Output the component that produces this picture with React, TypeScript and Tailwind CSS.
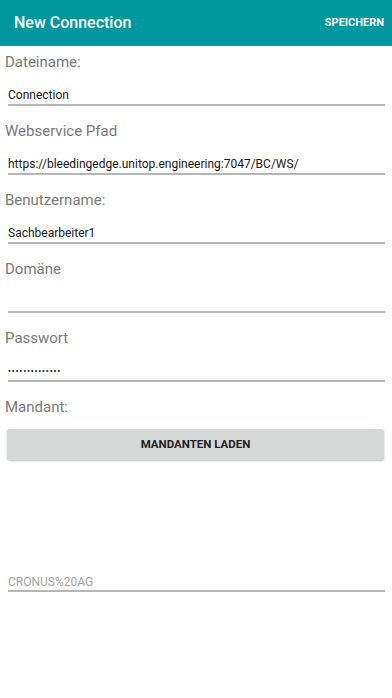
// New Connection — settings form for a webservice connection (Android-style).
const FIELDS = [
  { label: "Dateiname:", value: "Connection" },
  { label: "Webservice Pfad", value: "https://bleedingedge.unitop.engineering:7047/BC/WS/" },
  { label: "Benutzername:", value: "Sachbearbeiter1" },
  { label: "Domäne", value: "" },
  { label: "Passwort", value: "••••••••••••••", password: true },
];

function Field({ label, value, password }: { label: string; value: string; password?: boolean }) {
  return (
    <div className="flex flex-col">
      <div className="h-5 pl-[5px] text-[15px] leading-5 text-[#7a7a7a]">{label}</div>
      <div className="mt-[15px] ml-2 mr-[7px] border-b-2 border-[#b5b5b5] pb-px">
        <div
          className={
            password
              ? "h-4 text-[9px] leading-4 tracking-[0.75px] text-[#212121]"
              : "h-4 text-[12px] leading-4 text-[#1a1a1a]"
          }
        >
          {value}
        </div>
      </div>
    </div>
  );
}

export default function App() {
  return (
    <div className="flex h-[698px] w-[392px] flex-col bg-white font-['Roboto',sans-serif]">
      <header className="flex h-[46px] items-center justify-between bg-[#00979e] pl-[14px] pr-2">
        <h1 className="text-[16px] font-medium text-white">New Connection</h1>
        <button className="text-[11px] font-bold text-white">SPEICHERN</button>
      </header>

      <div className="flex flex-col gap-[15px] pt-[6px]">
        {FIELDS.map((f) => (
          <Field key={f.label} {...f} />
        ))}
      </div>

      <div className="mt-[15px] h-5 pl-[5px] text-[15px] leading-5 text-[#7a7a7a]">Mandant:</div>

      <button className="mt-3 ml-[7px] mr-2 flex h-[31px] items-center justify-center rounded-[3px] bg-[#d6d7d7] text-[11.5px] font-bold text-[#222222] shadow-[0_1px_2px_rgba(0,0,0,0.25)]">
        MANDANTEN LADEN
      </button>

      <div className="mt-[114px] ml-2 mr-[7px] border-b-2 border-[#b5b5b5]">
        <div className="h-4 text-[12px] leading-4 text-[#a3a3a3]">CRONUS%20AG</div>
      </div>
    </div>
  );
}
